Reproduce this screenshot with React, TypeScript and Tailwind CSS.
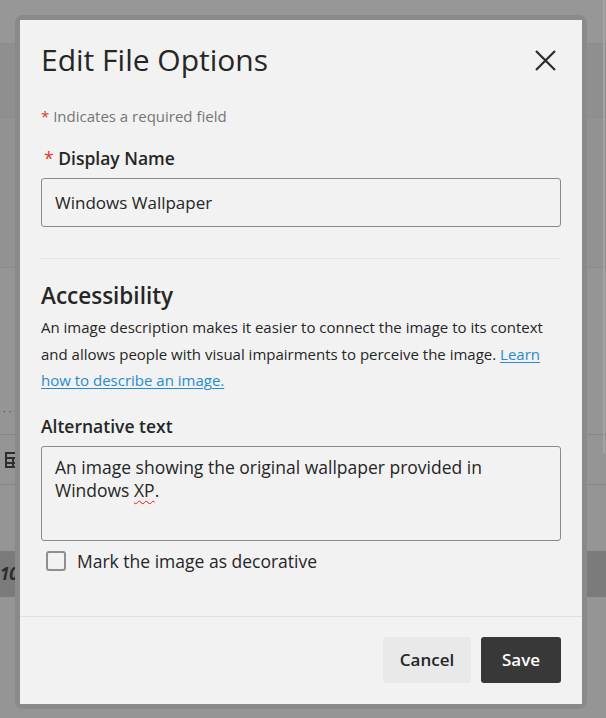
import React from "react";

const font = { fontFamily: "'Open Sans', 'Noto Sans', sans-serif" };

function BackdropPage() {
  // dimmed page content behind the overlay (only a thin strip is visible)
  return (
    <div className="flex h-full w-full flex-col">
      <div className="h-[44px] border-b border-[#8c8c8c] bg-[#979797]" />
      <div className="h-[73px] bg-[#8f8f8f]" />
      <div className="h-[151px] border-y border-[#8c8c8c] bg-[#929292]" />
      <div className="flex h-[166px] items-end pb-[18px] pl-[3px]">
        <span className="text-[10px] leading-none tracking-[3px] text-[#4a4a4a]">···</span>
      </div>
      <div className="flex h-[51px] items-center border-y border-[#868686] pl-[5px]">
        <svg width="16" height="16" viewBox="0 0 16 16" fill="none" stroke="#2e2e2e" strokeWidth="2">
          <rect x="1" y="1" width="14" height="14" />
          <path d="M1 6h14M1 11h14M8 6v9" />
        </svg>
      </div>
      <div className="h-[66px]" />
      <div className="flex h-[46px] items-center bg-[#7b7b7b] pl-0">
        <span className="text-[17px] font-bold italic text-[#2b2b2b]" style={font}>10 s</span>
      </div>
    </div>
  );
}

export default function App() {
  return (
    <div className="relative h-[718px] w-full overflow-hidden bg-[#959595]" style={font}>
      <div className="absolute inset-0">
        <BackdropPage />
      </div>
      <div className="absolute right-[1px] top-0 h-[453px] w-[2px] bg-[#a3a3a3]" />

      {/* modal */}
      <div className="absolute left-[15px] top-[15px] w-[572px] rounded-[8px] bg-[#8a8a8a] p-[5px]">
        <div className="flex w-[562px] flex-col bg-[#f2f2f2] text-[#262626]">
          <div className="px-[21px] pt-[20px]">
            <div className="flex h-[40px] items-center justify-between">
              <h2 className="text-[30px] leading-[40px] font-normal text-[#262626]">Edit File Options</h2>
              <button className="mr-[5px] flex h-[22px] w-[22px] items-center justify-center">
                <svg width="21" height="21" viewBox="0 0 21 21" stroke="#2b2b2b" strokeWidth="2.2" strokeLinecap="butt">
                  <path d="M1 1l19 19M20 1L1 20" />
                </svg>
              </button>
            </div>

            <p className="mt-[26px] text-[15px] leading-[20px] text-[#767676]">
              <span className="text-[#e0362c]">*</span> Indicates a required field
            </p>

            <label className="mt-[20px] block text-[17.5px] leading-[24px] font-semibold text-[#262626]">
              <span className="ml-[3px] font-normal text-[#e0362c]">*</span> Display Name
            </label>
            <div className="mt-[8px] flex h-[49px] items-center rounded-[3px] border border-[#8a8a8a] px-[13px] text-[17px]">
              Windows Wallpaper
            </div>

            <div className="mt-[31px] h-px bg-[#e3e3e3]" />

            <h3 className="mt-[21px] text-[22.5px] leading-[32px] font-semibold">Accessibility</h3>
            <p className="mt-[2px] text-[15px] leading-[26.6px] text-[#262626]">
              An image description makes it easier to connect the image to its context and allows people with
              visual impairments to perceive the image.{" "}
              <a className="text-[#2a8ad0] underline underline-offset-2">Learn how to describe an image.</a>
            </p>

            <label className="mt-[20px] block text-[17.5px] leading-[24px] font-semibold">Alternative text</label>
            <div className="mt-[8px] h-[95px] rounded-[3px] border border-[#8a8a8a] px-[13px] pt-[9px] text-[17.5px] leading-[23px]">
              An image showing the original wallpaper provided in Windows{" "}
              <span className="underline decoration-[#e01b1b] decoration-wavy decoration-1 underline-offset-[3px]">XP</span>.
            </div>

            <div className="mt-[8px] flex items-center gap-[11px] pl-[5px] pb-[43px]">
              <span className="h-[20px] w-[20px] rounded-[3px] border-2 border-[#8f8f8f]" />
              <span className="text-[17.5px] leading-[24px]">Mark the image as decorative</span>
            </div>
          </div>

          <div className="flex justify-end gap-[10px] border-t border-[#e0e0e0] px-[21px] pt-[20px] pb-[21px]">
            <button className="h-[46px] w-[88px] rounded-[3px] bg-[#e9e9e9] text-[17px] font-semibold text-[#262626]">
              Cancel
            </button>
            <button className="h-[46px] w-[80px] rounded-[3px] bg-[#383838] text-[17px] font-semibold text-white">
              Save
            </button>
          </div>
        </div>
      </div>
    </div>
  );
}
